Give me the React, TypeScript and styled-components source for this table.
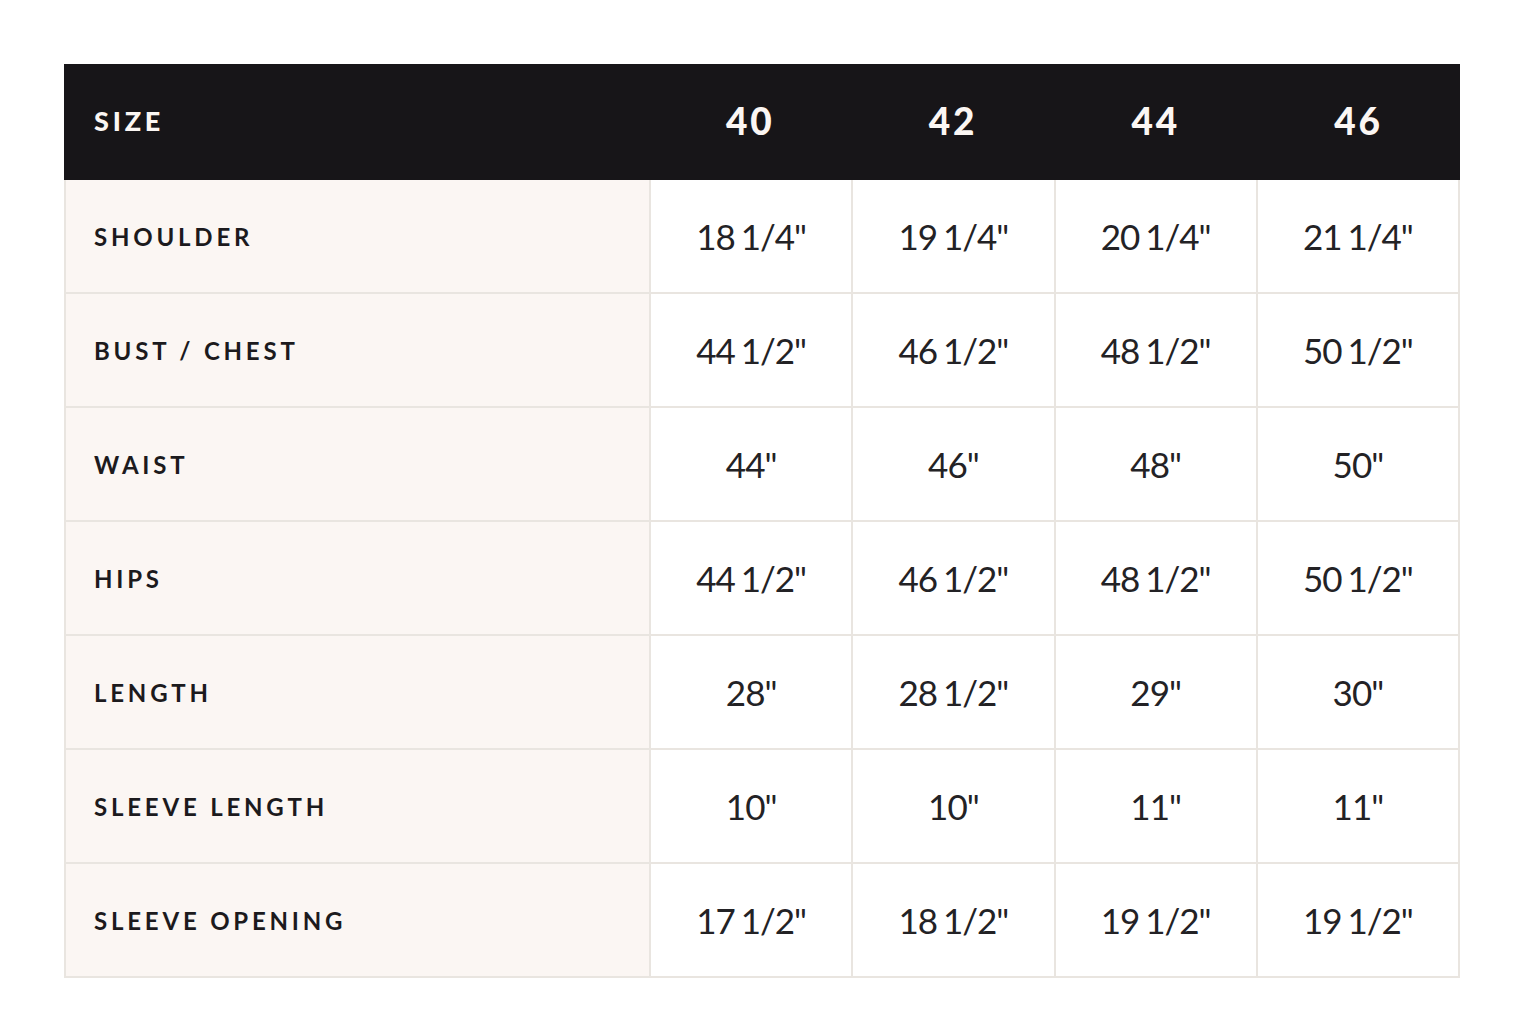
import React from 'react';
import styled, { createGlobalStyle } from 'styled-components';

const GlobalStyle = createGlobalStyle`
  body {
    margin: 0;
    background: #fff;
    font-family: 'Lato', 'Noto Sans', sans-serif;
  }
`;

const Page = styled.div`
  padding: 64px 60px 58px 64px;
`;

const Chart = styled.div`
  width: 1396px;
  border-left: 2px solid #e9e5e0;
  box-sizing: border-box;
`;

const Row = styled.div<{ $head?: boolean }>`
  display: grid;
  grid-template-columns: 585px repeat(4, 1fr);
  height: ${(p) => (p.$head ? '116px' : '114px')};
  background: ${(p) => (p.$head ? '#171518' : 'transparent')};
  margin-left: ${(p) => (p.$head ? '-2px' : '0')};
  width: ${(p) => (p.$head ? '1396px' : 'auto')};
`;

const Label = styled.div<{ $head?: boolean }>`
  display: flex;
  align-items: center;
  box-sizing: border-box;
  padding-left: ${(p) => (p.$head ? '30px' : '28px')};
  padding-bottom: ${(p) => (p.$head ? '4px' : '0')};
  background: ${(p) => (p.$head ? 'transparent' : '#fbf6f3')};
  color: ${(p) => (p.$head ? '#fbf6f3' : '#1c1a1d')};
  font-size: ${(p) => (p.$head ? '27px' : '24px')};
  font-weight: ${(p) => (p.$head ? 900 : 700)};
  letter-spacing: ${(p) => (p.$head ? '3.8px' : '3.8px')};
  border-right: ${(p) => (p.$head ? 'none' : '2px solid #e9e5e0')};
  border-bottom: ${(p) => (p.$head ? 'none' : '2px solid #e9e5e0')};
`;

const Cell = styled.div<{ $head?: boolean }>`
  display: flex;
  align-items: center;
  justify-content: center;
  box-sizing: border-box;
  padding-bottom: ${(p) => (p.$head ? '4px' : '0')};
  color: ${(p) => (p.$head ? '#fbf6f3' : '#232225')};
  font-size: ${(p) => (p.$head ? '37px' : '35px')};
  font-weight: ${(p) => (p.$head ? 900 : 400)};
  letter-spacing: ${(p) => (p.$head ? '3px' : '-1px')};
  word-spacing: ${(p) => (p.$head ? '0' : '-2px')};
  white-space: pre;
  border-right: ${(p) => (p.$head ? 'none' : '2px solid #e9e5e0')};
  border-bottom: ${(p) => (p.$head ? 'none' : '2px solid #e9e5e0')};
`;

const sizes = ['40', '42', '44', '46'];

const rows: [string, string[]][] = [
  ['SHOULDER', ['18 1/4"', '19 1/4"', '20 1/4"', '21 1/4"']],
  ['BUST / CHEST', ['44 1/2"', '46 1/2"', '48 1/2"', '50 1/2"']],
  ['WAIST', ['44"', '46"', '48"', '50"']],
  ['HIPS', ['44 1/2"', '46 1/2"', '48 1/2"', '50 1/2"']],
  ['LENGTH', ['28"', '28 1/2"', '29"', '30"']],
  ['SLEEVE LENGTH', ['10"', '10"', '11"', '11"']],
  ['SLEEVE OPENING', ['17 1/2"', '18 1/2"', '19 1/2"', '19 1/2"']],
];

export default function App() {
  return (
    <>
      <GlobalStyle />
      <Page>
        <Chart>
          <Row $head>
            <Label $head>SIZE</Label>
            {sizes.map((s) => (
              <Cell $head key={s}>{s}</Cell>
            ))}
          </Row>
          {rows.map(([name, values]) => (
            <Row key={name}>
              <Label>{name}</Label>
              {values.map((v, i) => (
                <Cell key={i}>{v}</Cell>
              ))}
            </Row>
          ))}
        </Chart>
      </Page>
    </>
  );
}
